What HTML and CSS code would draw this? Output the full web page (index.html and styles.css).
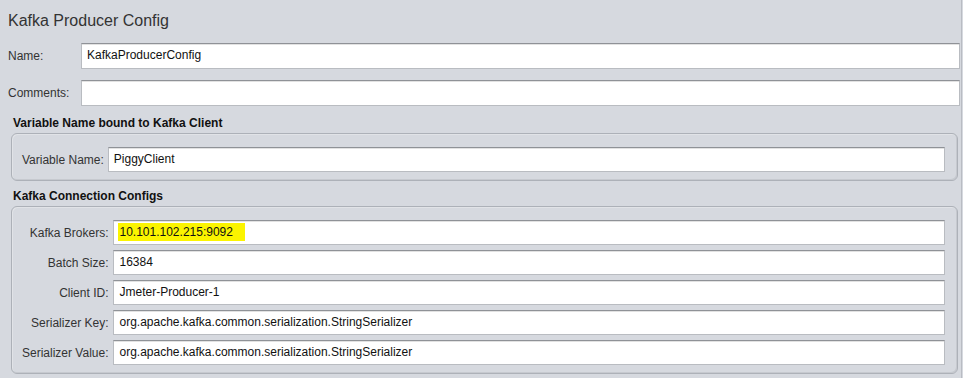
FILE: index.html
```html
<!DOCTYPE html>
<html lang="en">
<head>
    <meta charset="UTF-8">
    <title>Kafka Producer Config</title>
    <link rel="stylesheet" href="styles.css">
</head>
<body>
    <div class="panel">
        <h1 class="title">Kafka Producer Config</h1>

        <div class="top-form">
            <label>Name:</label>
            <div class="field">KafkaProducerConfig</div>
            <label>Comments:</label>
            <div class="field"></div>
        </div>

        <!-- Variable name -->
        <h2 class="group-title">Variable Name bound to Kafka Client</h2>
        <div class="group">
            <label>Variable Name:</label>
            <div class="field">PiggyClient</div>
        </div>

        <!-- Connection configs -->
        <h2 class="group-title">Kafka Connection Configs</h2>
        <div class="group group-tight">
            <label>Kafka Brokers:</label>
            <div class="field"><span class="marker">10.101.102.215:9092</span></div>
            <label>Batch Size:</label>
            <div class="field">16384</div>
            <label>Client ID:</label>
            <div class="field">Jmeter-Producer-1</div>
            <label>Serializer Key:</label>
            <div class="field">org.apache.kafka.common.serialization.StringSerializer</div>
            <label>Serializer Value:</label>
            <div class="field">org.apache.kafka.common.serialization.StringSerializer</div>
        </div>
    </div>
</body>
</html>
```

FILE: styles.css
```css
/* Page */
body {
    margin: 0;
    background: #d6d9df;
    font-family: "Liberation Sans", Arial, sans-serif;
    font-size: 12px;
    color: #333;
    width: 963px;
    height: 378px;
    overflow: hidden;
}

.panel {
    width: 962px;
    height: 378px;
    border-right: 1px solid #b9bcc3;
    box-sizing: border-box;
    padding: 11px 0 0 0;
}

.title {
    margin: 0 0 12px 8px;
    font-size: 16px;
    font-weight: normal;
    line-height: 20px;
    color: #333;
}

/* Name / Comments */
.top-form {
    display: grid;
    grid-template-columns: 73px 1fr;
    row-gap: 11px;
    align-items: center;
    padding-left: 8px;
    margin: 0 1px 10px 0;
}

.top-form .field {
    height: 26px;
}

label {
    color: #333;
    white-space: nowrap;
}

.group label {
    text-align: right;
}

/* Text fields */
.field {
    height: 25px;
    box-sizing: border-box;
    background: #fff;
    border: 1px solid #b9bcc1;
    border-top-color: #8f9297;
    box-shadow: inset 0 1px 0 #e2e2e2;
    padding: 0 5px;
    line-height: 23px;
    color: #111;
    white-space: nowrap;
    overflow: hidden;
}

/* Titled groups */
.group-title {
    margin: 0 0 2px 13px;
    font-size: 12px;
    font-weight: bold;
    line-height: 15px;
    color: #111;
}

.group {
    display: grid;
    grid-template-columns: auto 1fr;
    column-gap: 4px;
    row-gap: 5px;
    align-items: center;
    margin: 0 3px 8px 11px;
    padding: 13px 12px 8px 10px;
    border: 1px solid #adb1b8;
    border-radius: 6px;
    box-shadow: inset -1px -1px 0 #c6c9cf, inset 1px 1px 0 #e1e3e7;
}

.group-tight {
    column-gap: 5px;
}

.marker {
    background: #fbf400;
    padding: 2px 12px 2px 1px;
    margin-left: -1px;
}
```
